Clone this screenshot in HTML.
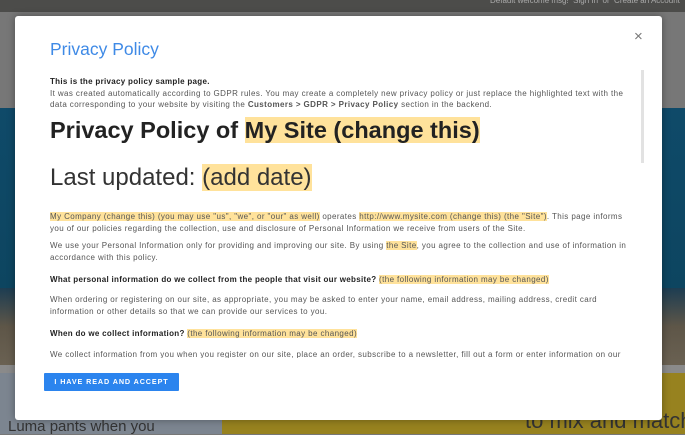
<!DOCTYPE html>
<html><head><meta charset="utf-8"><style>
*{margin:0;padding:0;box-sizing:border-box}
body{width:685px;height:434px;overflow:hidden;position:relative;font-family:"Liberation Sans",sans-serif;background:#777}
.bg{position:absolute;white-space:nowrap}
.modal{position:absolute;left:15px;top:16px;width:647px;height:404px;background:#fff;border-radius:3px;box-shadow:0 0 8px rgba(0,0,0,.35)}
.h{background:#ffe29b}
.t{position:absolute;left:35px;top:23px;font-size:17.5px;color:#3f8ae6}
.x{position:absolute;left:619px;top:12px;font-size:15px;color:#777}
.sb{position:absolute;left:626px;top:54px;width:3px;height:93px;background:#e2e2e2}
.c{position:absolute;left:35px;top:60px;width:586px;height:282px;overflow:hidden;color:#555;font-size:8px;letter-spacing:.4px;line-height:11.5px}
.c p{margin:0}
h1{font-size:23.5px;letter-spacing:0;line-height:30px;color:#222;margin:4px 0 16px;font-weight:bold;white-space:nowrap}
h2{font-size:24px;letter-spacing:0;font-weight:normal;line-height:34px;color:#333;margin:0 0 16px;white-space:nowrap}
.pp{line-height:12px}
.btn{position:absolute;left:29px;top:357px;width:135px;height:18px;background:#2b84ee;color:#fff;font-size:7.2px;font-weight:bold;letter-spacing:.9px;text-align:center;line-height:18px;border-radius:1px}
</style></head><body>
<div class="bg" style="left:0;top:0;width:685px;height:12px;background:#4c4c4a"></div>
<div class="bg" style="left:0;top:108px;width:685px;height:180px;background:linear-gradient(#0f4a69,#0d4560)"></div>
<div class="bg" style="left:0;top:288px;width:685px;height:77px;background:linear-gradient(#1d3d52,#5e5648 50%,#6a6152)"></div>
<div class="bg" style="left:0;top:365px;width:685px;height:8px;background:#8a8a8a"></div>
<div class="bg" style="left:0;top:373px;width:222px;height:61px;background:#7c8590"></div>
<div class="bg" style="left:222px;top:373px;width:463px;height:61px;background:#97821f"></div>
<div class="bg" style="left:8px;top:418px;font-size:15px;color:#333">Luma pants when you</div>
<div class="bg" style="left:525px;top:408px;font-size:22px;color:#333">to mix and match</div>
<div class="bg" style="left:490px;top:-4px;font-size:8px;color:#aaa">Default welcome msg! &nbsp;Sign In &nbsp;or &nbsp;Create an Account</div>
<div class="modal">
<div class="t">Privacy Policy</div>
<div class="x">×</div>
<div class="sb"></div>
<div class="c">
<p style="font-weight:bold;color:#222;letter-spacing:.3px">This is the privacy policy sample page.</p>
<p>It was created automatically according to GDPR rules. You may create a completely new privacy policy or just replace the highlighted text with the data corresponding to your website by visiting the <b>Customers &gt; GDPR &gt; Privacy Policy</b> section in the backend.</p>
<h1>Privacy Policy of <span class="h">My Site (change this)</span></h1>
<h2>Last updated: <span class="h">(add date)</span></h2>
<div class="pp">
<p style="margin-bottom:5px"><span class="h">My Company (change this) (you may use "us", "we", or "our" as well)</span> operates <span class="h">http://www.mysite.com (change this) (the "Site")</span>. This page informs you of our policies regarding the collection, use and disclosure of Personal Information we receive from users of the Site.</p>
<p style="margin-bottom:10px">We use your Personal Information only for providing and improving our site. By using <span class="h">the Site</span>, you agree to the collection and use of information in accordance with this policy.</p>
<p style="margin-bottom:8px"><b style="color:#222;letter-spacing:.3px">What personal information do we collect from the people that visit our website?</b> <span class="h">(the following information may be changed)</span></p>
<p style="margin-bottom:10px">When ordering or registering on our site, as appropriate, you may be asked to enter your name, email address, mailing address, credit card information or other details so that we can provide our services to you.</p>
<p style="margin-bottom:9px"><b style="color:#222;letter-spacing:.3px">When do we collect information?</b> <span class="h">(the following information may be changed)</span></p>
<p>We collect information from you when you register on our site, place an order, subscribe to a newsletter, fill out a form or enter information on our site.</p>
</div>
</div>
<div class="btn">I HAVE READ AND ACCEPT</div>
</div>
</body></html>
